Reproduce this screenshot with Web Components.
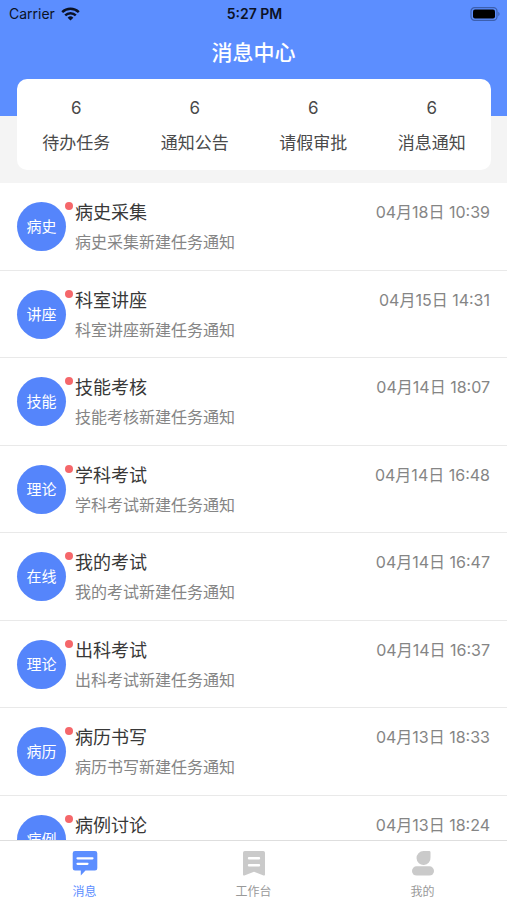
<!DOCTYPE html>
<html lang="zh-CN">
<head>
<meta charset="utf-8">
<meta name="viewport" content="width=device-width, initial-scale=1">
<title>消息中心</title>
<style>
  body {
    margin: 0;
    font-family: Inter, "Noto Sans CJK SC", sans-serif;
    color: #4a4a4a;
    background: #fff;
    --brand: #5c8eff;
    --line: #e9e9e9;
    --gutter: 17px;
  }
</style>
</head>
<body>
<message-app></message-app>

<script>
const define = (name, html, setup) => {
  const template = document.createElement('template');
  template.innerHTML = html;
  customElements.define(name, class extends HTMLElement {
    constructor() {
      super();
      this.attachShadow({ mode: 'open' }).append(template.content.cloneNode(true));
    }
    connectedCallback() {
      if (setup) setup(this, this.shadowRoot);
    }
  });
};

define('status-bar', `
  <style>
    :host { display: grid; grid-template-columns: 1fr auto 1fr; align-items: center; height: 28px; padding: 0 7px 0 9px; color: #0b1225; font-size: 14px; line-height: 20px; }
    .carrier { display: flex; align-items: center; gap: 6px; }
    .time { font-weight: 600; }
    .battery { justify-self: end; }
    svg { display: block; }
  </style>
  <span class="carrier">Carrier
    <svg width="19" height="14" viewBox="0 0 19 14" fill="none" stroke="currentColor" stroke-width="2.5" aria-hidden="true">
      <path d="M1.2 5.1a12 12 0 0 1 16.6 0M4.2 8.3a7.6 7.6 0 0 1 10.6 0"/>
      <path d="M9.5 13.6 6.6 10.7a4.1 4.1 0 0 1 5.8 0z" fill="currentColor" stroke="none"/>
    </svg>
  </span>
  <span class="time">5:27 PM</span>
  <svg class="battery" width="30" height="14" viewBox="0 0 30 14" aria-hidden="true">
    <rect x="1" y=".7" width="26" height="12.6" rx="3.6" fill="none" stroke="#3c5fae" stroke-width="1.2"/>
    <rect x="3" y="2.5" width="22" height="9" rx="2" fill="#000"/>
    <path d="M28.3 4.8c1.7.7 1.7 3.7 0 4.4z" fill="#3c5fae"/>
  </svg>`);

define('page-header', `
  <style>
    :host { display: block; background: var(--brand); padding-bottom: 37px; }
    h1 { margin: 0; padding: 9px 0 10px; font-size: 21px; line-height: 32px; font-weight: 500; text-align: center; color: #fff; }
  </style>
  <status-bar></status-bar>
  <h1><slot></slot></h1>`);

define('summary-card', `
  <style>
    :host { display: block; background: #f4f4f4; padding: 0 16px 13px 17px; }
    .card { position: relative; display: grid; grid-template-columns: repeat(4, 1fr); margin-top: -37px; padding: 17px 0 15px; background: #fff; border-radius: 10px; }
  </style>
  <div class="card"><slot></slot></div>`);

define('summary-item', `
  <style>
    :host { display: flex; flex-direction: column; align-items: center; gap: 11px; font-size: 17px; line-height: 24px; }
  </style>
  <span id="count"></span>
  <span><slot></slot></span>`,
  (el, root) => { root.getElementById('count').textContent = el.getAttribute('count'); });

define('message-list', `
  <style>
    :host { display: grid; grid-auto-rows: 88px 87px; flex: 1; min-height: 0; overflow: auto; scrollbar-width: none; }
  </style>
  <slot></slot>`);

define('message-row', `
  <style>
    :host { display: flex; box-sizing: border-box; padding: 17px var(--gutter) 0; border-bottom: 1px solid var(--line); }
    .avatar { position: relative; flex: none; width: 49px; height: 49px; margin: 2px 9px 0 0; border-radius: 50%; background: #5585fb; color: #fff; font-size: 15px; line-height: 49px; text-align: center; }
    .avatar::after { content: ""; position: absolute; top: 0; left: 48px; width: 8px; height: 8px; border-radius: 50%; background: #f5676a; }
    .body { flex: 1; min-width: 0; display: flex; flex-direction: column; gap: 4px; }
    .top { display: flex; justify-content: space-between; }
    h2 { margin: 0; font-size: 18px; line-height: 26px; font-weight: 400; color: #383838; }
    time, p { margin: 0; font-size: 16px; line-height: 24px; color: #858585; }
  </style>
  <div class="avatar" id="tag"></div>
  <div class="body">
    <div class="top"><h2><slot></slot></h2><time id="time"></time></div>
    <p id="note"></p>
  </div>`,
  (el, root) => {
    root.getElementById('tag').textContent = el.getAttribute('tag');
    root.getElementById('time').textContent = el.getAttribute('time');
    root.getElementById('note').textContent = el.textContent + '新建任务通知';
  });

define('tab-bar', `
  <style>
    :host { display: grid; grid-template-columns: repeat(3, 1fr); flex: none; height: 59px; border-top: 1px solid #dedede; background: #fff; }
  </style>
  <slot></slot>`);

define('tab-item', `
  <style>
    :host { display: grid; color: #999; --icon: #cacaca; }
    :host([active]) { color: var(--brand); --icon: var(--brand); }
    button { display: flex; flex-direction: column; align-items: center; gap: 8px; padding: 9px 0 0; border: 0; background: none; color: inherit; font: inherit; font-size: 12px; line-height: 16px; cursor: pointer; }
    ::slotted(svg) { display: block; color: var(--icon); }
  </style>
  <button type="button"><slot name="icon"></slot><span><slot></slot></span></button>`);

define('message-app', `
  <style>
    :host { display: flex; flex-direction: column; height: 100vh; }
    page-header, summary-card { flex: none; }
  </style>
  <page-header>消息中心</page-header>
  <summary-card>
    <summary-item count="6">待办任务</summary-item>
    <summary-item count="6">通知公告</summary-item>
    <summary-item count="6">请假审批</summary-item>
    <summary-item count="6">消息通知</summary-item>
  </summary-card>
  <message-list>
    <message-row tag="病史" time="04月18日 10:39">病史采集</message-row>
    <message-row tag="讲座" time="04月15日 14:31">科室讲座</message-row>
    <message-row tag="技能" time="04月14日 18:07">技能考核</message-row>
    <message-row tag="理论" time="04月14日 16:48">学科考试</message-row>
    <message-row tag="在线" time="04月14日 16:47">我的考试</message-row>
    <message-row tag="理论" time="04月14日 16:37">出科考试</message-row>
    <message-row tag="病历" time="04月13日 18:33">病历书写</message-row>
    <message-row tag="病例" time="04月13日 18:24">病例讨论</message-row>
  </message-list>
  <tab-bar>
    <tab-item active>
      <svg slot="icon" width="26" height="26" viewBox="0 0 26 26" aria-hidden="true">
        <path d="M3 1h20a2.3 2.3 0 0 1 2.3 2.3v15A2.3 2.3 0 0 1 23 20.600h-9.500L8.800 25.400V20.600H3a2.300 2.300 0 0 1-2.300-2.300v-15A2.300 2.300 0 0 1 3 1z" fill="currentColor"/>
        <path d="M5.500 8.300h15M5.500 13.800h10" stroke="#fff" stroke-width="2.200" stroke-linecap="round"/>
      </svg>消息
    </tab-item>
    <tab-item>
      <svg slot="icon" width="26" height="26" viewBox="0 0 26 26" aria-hidden="true">
        <path d="M3.800 1h18.400a1.800 1.800 0 0 1 1.800 1.800v21.700q0 1.500-1.400.9L13 21.800 3.400 25.400Q2 26 2 24.500V2.800A1.800 1.800 0 0 1 3.800 1z" fill="currentColor"/>
        <path d="M8 8.300h10M8 15.200h10" stroke="#fff" stroke-width="2.400" stroke-linecap="round"/>
      </svg>工作台
    </tab-item>
    <tab-item>
      <svg slot="icon" width="26" height="26" viewBox="0 0 26 26" fill="currentColor" aria-hidden="true">
        <path d="M13.500 1h5.700q1.300 0 1.300 1.300V7.300a7 7 0 1 1-7-6.300z"/>
        <rect x="2" y="16.300" width="22" height="9.200" rx="4.600"/>
      </svg>我的
    </tab-item>
  </tab-bar>`);
</script>
</body>
</html>
